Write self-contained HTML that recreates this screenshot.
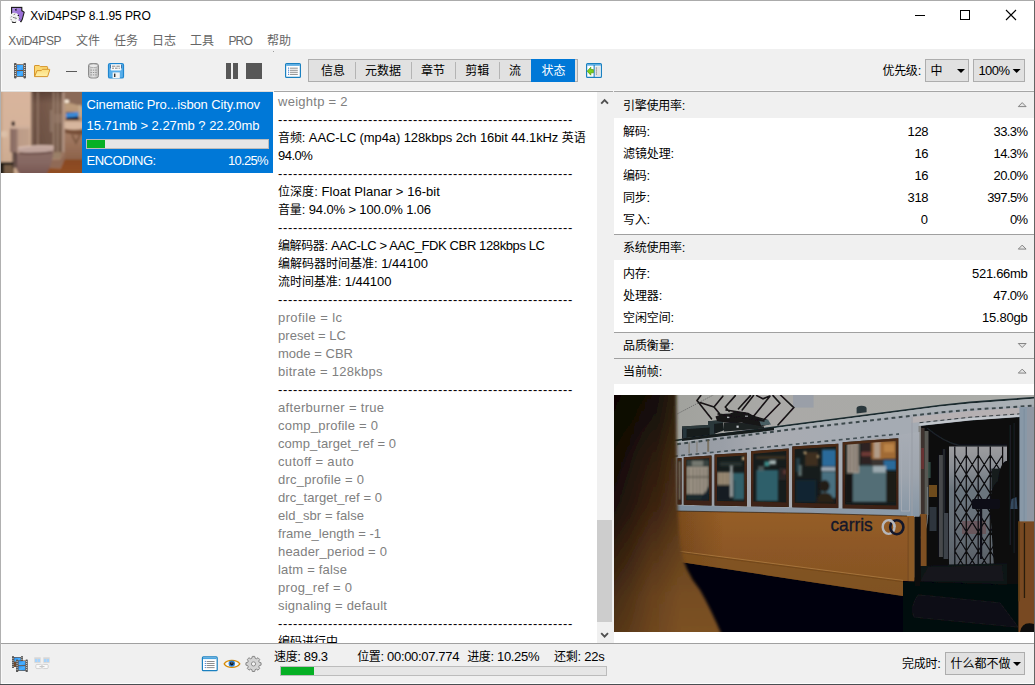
<!DOCTYPE html>
<html lang="zh-CN">
<head>
<meta charset="utf-8">
<title>XviD4PSP 8.1.95 PRO</title>
<style>
html,body{margin:0;padding:0;}
body{width:1035px;height:685px;overflow:hidden;background:#fff;font-family:"Liberation Sans","Noto Sans CJK SC",sans-serif;font-size:13px;color:#000;position:relative;}
.a{position:absolute;}
.t{position:absolute;white-space:nowrap;line-height:18px;height:18px;font-size:13px;}
.c{font-size:12px;}
svg{position:absolute;overflow:visible;}
</style>
</head>
<body>
<!-- window frame -->
<div class="a" style="left:0;top:0;width:1035px;height:1px;background:#ababab;"></div>
<div class="a" style="left:0;top:0;width:1px;height:685px;background:#b0b0b0;"></div>
<div class="a" style="left:1034px;top:1px;width:1px;height:684px;background:#646464;"></div>
<div class="a" style="left:0;top:684px;width:1035px;height:1px;background:#4a4f52;"></div>
<!-- toolbar -->
<div class="a" style="left:1px;top:49px;width:1033px;height:42px;background:#f0f0f0;"></div>
<div class="a" style="left:1px;top:90px;width:1033px;height:1px;background:#f7f7f7;"></div>
<div class="a" style="left:1px;top:91px;width:272px;height:1px;background:#dfdcd9;"></div>
<div class="a" style="left:273px;top:91px;width:1px;height:1px;background:#f4f4f4;"></div>
<div class="a" style="left:274px;top:91px;width:760px;height:1px;background:#a6a6a6;"></div>
<div class="a" style="left:613px;top:91px;width:1px;height:1px;background:#f0f0f0;"></div>
<div class="a" style="left:273px;top:51px;width:1px;height:1px;background:#9c9c9c;"></div>
<!-- tabs -->
<div class="a" style="left:308px;top:59px;width:270px;height:23px;box-sizing:border-box;background:#e1e1e1;border:1px solid #adadad;"></div>
<div class="a" style="left:355px;top:62px;width:1px;height:17px;background:#b4b4b4;"></div>
<div class="a" style="left:411px;top:62px;width:1px;height:17px;background:#b4b4b4;"></div>
<div class="a" style="left:455px;top:62px;width:1px;height:17px;background:#b4b4b4;"></div>
<div class="a" style="left:499px;top:62px;width:1px;height:17px;background:#b4b4b4;"></div>
<div class="a" style="left:531px;top:59px;width:44px;height:23px;background:#0078d7;"></div>
<!-- priority selects -->
<div class="a" style="left:925px;top:59px;width:44px;height:23px;box-sizing:border-box;background:#e1e1e1;border:1px solid #adadad;"></div>
<div class="a" style="left:973px;top:59px;width:52px;height:23px;box-sizing:border-box;background:#e1e1e1;border:1px solid #adadad;"></div>
<!-- left list -->
<svg style="left:1px;top:92px;" width="81" height="81" viewBox="0 0 81 81">
<defs>
<clipPath id="tc"><rect x="0" y="0" width="81" height="81"/></clipPath>
<filter id="tb" x="-10%" y="-10%" width="120%" height="120%"><feGaussianBlur stdDeviation="0.8"/></filter>
<linearGradient id="tw" x1="0" y1="0" x2="0" y2="1"><stop offset="0" stop-color="#d9b59d"/><stop offset="0.5" stop-color="#d5b39a"/><stop offset="1" stop-color="#c9a78c"/></linearGradient>
<linearGradient id="tsh" x1="0" y1="0" x2="1" y2="0"><stop offset="0" stop-color="#6e5244"/><stop offset="0.35" stop-color="#755849"/><stop offset="0.7" stop-color="#7c6050"/><stop offset="1" stop-color="#866a58"/></linearGradient>
<linearGradient id="tshy" x1="0" y1="0" x2="0" y2="1"><stop offset="0" stop-color="#3a241e" stop-opacity="0.5"/><stop offset="0.2" stop-color="#3a241e" stop-opacity="0"/><stop offset="1" stop-color="#3a2a20" stop-opacity="0.2"/></linearGradient>
<linearGradient id="tfl" x1="0" y1="0" x2="0" y2="1"><stop offset="0" stop-color="#884821"/><stop offset="1" stop-color="#935020"/></linearGradient>
<linearGradient id="ttl" x1="0" y1="0" x2="0" y2="1"><stop offset="0" stop-color="#8a6c66"/><stop offset="0.5" stop-color="#866862"/><stop offset="1" stop-color="#765450"/></linearGradient>
<linearGradient id="trw" x1="0" y1="0" x2="0" y2="1"><stop offset="0" stop-color="#a08062"/><stop offset="0.12" stop-color="#bc9c7c"/><stop offset="0.4" stop-color="#b08a70"/><stop offset="0.6" stop-color="#a27a62"/><stop offset="1" stop-color="#8c624a"/></linearGradient>
<linearGradient id="ttk" x1="0" y1="0" x2="1" y2="0"><stop offset="0" stop-color="#8a6c62"/><stop offset="0.3" stop-color="#907268"/><stop offset="0.45" stop-color="#bc9c88"/><stop offset="1" stop-color="#c0a08a"/></linearGradient>
</defs>
<g clip-path="url(#tc)"><g filter="url(#tb)">
<rect x="-2" y="-2" width="85" height="85" fill="url(#tw)"/>
<rect x="-2" y="-2" width="3.4" height="85" fill="#c4a288"/>
<!-- right wall / ceiling -->
<rect x="63" y="6" width="20" height="62" fill="url(#trw)"/>
<path d="M63 -2 H83 V15 L63 9 Z" fill="#8a6a58"/>
<ellipse cx="65.6" cy="9.2" rx="2.5" ry="1.7" fill="#fff0de"/>
<!-- shower -->
<rect x="30" y="-2" width="33.4" height="69.5" fill="url(#tsh)"/>
<rect x="30" y="-2" width="33.4" height="69.5" fill="url(#tshy)"/>
<rect x="36.2" y="0" width="1.3" height="66" fill="#9a7e6e"/>
<rect x="31" y="0" width="1" height="66" fill="#a68a78" fill-opacity="0.7"/>
<rect x="52" y="0" width="1.3" height="68" fill="#a08472"/>
<rect x="56" y="0" width="1.1" height="68" fill="#aa8e7c" fill-opacity="0.8"/>
<rect x="61.4" y="0" width="2" height="66" fill="#bc9e8c"/>
<rect x="49.5" y="18" width="1.4" height="22" fill="#a89080" fill-opacity="0.8"/>
<rect x="53.5" y="22" width="8" height="9" fill="#9a8070" fill-opacity="0.55"/>
<!-- shower tray -->
<path d="M49.6 60.4 L60.6 60 L63.6 60 V68 L59.6 76.4 L48 76.4 L48 67 Z" fill="#906a56"/>
<path d="M50.6 60.4 L60.8 60 L59 67 L48.6 67.4 Z" fill="#9a8068"/>
<path d="M48.4 67.4 L59 67 L63 60.4" stroke="#b08870" stroke-width="0.9" fill="none"/>
<!-- floor -->
<path d="M40 83 L45 76 L59.6 76.4 L63.5 67.6 H83 V83 Z" fill="url(#tfl)"/>
<!-- window / mirror -->
<rect x="65" y="20.4" width="12.6" height="7.6" fill="#101826"/>
<path d="M65 21.2 L77.6 19.8 V24.6 L65 25.8 Z" fill="#3a8ad8"/>
<rect x="77.6" y="13" width="2.6" height="12" fill="#c8ae90"/>
<!-- sink -->
<path d="M63.4 29.6 H83 V36.6 Q72 38.4 63.4 36.4 Z" fill="#d6b69e"/>
<path d="M64 37 Q72 39.4 83 37.2 V42.4 Q73 43.6 64 41 Z" fill="#6e4630" fill-opacity="0.85"/>
<path d="M71 43 L75 51 L79 43" stroke="#7a5640" stroke-width="1.8" fill="none"/>
<!-- bin -->
<rect x="-2" y="70" width="15" height="13" fill="#241a18"/>
<rect x="3" y="73" width="10" height="9" fill="#84684c" fill-opacity="0.85"/>
<!-- toilet tank -->
<rect x="9" y="34.4" width="19.6" height="26" rx="1.5" fill="url(#ttk)"/>
<rect x="9" y="34.2" width="19.6" height="2.6" rx="1.2" fill="#cfb09c"/>
<rect x="10.6" y="29.6" width="3.2" height="4.2" rx="1" fill="#2a1e1c"/>
<rect x="0" y="39" width="6.4" height="6.2" rx="1.6" fill="#dcc0a8"/>
<!-- toilet bowl -->
<path d="M13 61 Q14 80 20 83 H45 Q52 70 52.6 58 L40 60 Z" fill="url(#ttl)"/>
<path d="M17 55.4 Q34 52.4 52.4 54 Q53.4 57.4 51 59.4 Q33 61.6 18.4 60.6 Q16 58 17 55.4 Z" fill="#c0a49c"/>
<path d="M17.4 55.6 Q34 52.8 52.2 54.2" stroke="#e0c4b8" stroke-width="1.2" fill="none"/>
<path d="M18.4 61.2 Q33 62.6 51 60.2" stroke="#664842" stroke-width="1.8" fill="none"/>
<rect x="11" y="60" width="5" height="16" fill="#3c2c2a" fill-opacity="0.6"/>
</g></g>
</svg>

<div class="a" style="left:82px;top:92px;width:191px;height:81px;background:#0078d7;"></div>
<div class="a" style="left:86px;top:139px;width:183px;height:10px;box-sizing:border-box;background:#e6e6e6;border:1px solid #bcbcbc;"></div>
<div class="a" style="left:87px;top:140px;width:18px;height:8px;background:#06b025;"></div>
<!-- text pane -->
<div class="a" style="left:273px;top:92px;width:324px;height:551px;overflow:hidden;">
<div class="t" style="top:1px;left:5px;color:#808080;letter-spacing:0.26px;">weightp = 2</div>
<div class="t" style="top:19px;left:5px;letter-spacing:0.67px;">-----------------------------------------------------------</div>
<div class="t" style="top:37px;left:5px;letter-spacing:-0.09px;"><span class="c">音频</span>: AAC-LC (mp4a) 128kbps 2ch 16bit 44.1kHz <span class="c">英语</span></div>
<div class="t" style="top:55px;left:5px;letter-spacing:-0.50px;">94.0%</div>
<div class="t" style="top:73px;left:5px;letter-spacing:0.67px;">-----------------------------------------------------------</div>
<div class="t" style="top:91px;left:5px;letter-spacing:0.05px;"><span class="c">位深度</span>: Float Planar &gt; 16-bit</div>
<div class="t" style="top:109px;left:5px;letter-spacing:-0.13px;"><span class="c">音量</span>: 94.0% &gt; 100.0% 1.06</div>
<div class="t" style="top:127px;left:5px;letter-spacing:0.67px;">-----------------------------------------------------------</div>
<div class="t" style="top:145px;left:5px;letter-spacing:-0.39px;"><span class="c">编解码器</span>: AAC-LC &gt; AAC_FDK CBR 128kbps LC</div>
<div class="t" style="top:163px;left:5px;letter-spacing:-0.01px;"><span class="c">编解码器时间基准</span>: 1/44100</div>
<div class="t" style="top:181px;left:5px;letter-spacing:-0.06px;"><span class="c">流时间基准</span>: 1/44100</div>
<div class="t" style="top:199px;left:5px;letter-spacing:0.67px;">-----------------------------------------------------------</div>
<div class="t" style="top:217px;left:5px;color:#808080;letter-spacing:0.40px;">profile = lc</div>
<div class="t" style="top:235px;left:5px;color:#808080;letter-spacing:0.04px;">preset = LC</div>
<div class="t" style="top:253px;left:5px;color:#808080;letter-spacing:0.02px;">mode = CBR</div>
<div class="t" style="top:271px;left:5px;color:#808080;letter-spacing:0.28px;">bitrate = 128kbps</div>
<div class="t" style="top:289px;left:5px;letter-spacing:0.67px;">-----------------------------------------------------------</div>
<div class="t" style="top:307px;left:5px;color:#808080;letter-spacing:0.31px;">afterburner = true</div>
<div class="t" style="top:325px;left:5px;color:#808080;letter-spacing:0.23px;">comp_profile = 0</div>
<div class="t" style="top:343px;left:5px;color:#808080;letter-spacing:0.07px;">comp_target_ref = 0</div>
<div class="t" style="top:361px;left:5px;color:#808080;letter-spacing:0.33px;">cutoff = auto</div>
<div class="t" style="top:379px;left:5px;color:#808080;letter-spacing:0.23px;">drc_profile = 0</div>
<div class="t" style="top:397px;left:5px;color:#808080;letter-spacing:0.06px;">drc_target_ref = 0</div>
<div class="t" style="top:415px;left:5px;color:#808080;letter-spacing:0.08px;">eld_sbr = false</div>
<div class="t" style="top:433px;left:5px;color:#808080;letter-spacing:0.05px;">frame_length = -1</div>
<div class="t" style="top:451px;left:5px;color:#808080;letter-spacing:0.19px;">header_period = 0</div>
<div class="t" style="top:469px;left:5px;color:#808080;letter-spacing:0.20px;">latm = false</div>
<div class="t" style="top:487px;left:5px;color:#808080;letter-spacing:0.32px;">prog_ref = 0</div>
<div class="t" style="top:505px;left:5px;color:#808080;letter-spacing:0.21px;">signaling = default</div>
<div class="t" style="top:523px;left:5px;letter-spacing:0.67px;">-----------------------------------------------------------</div>
<div class="t" style="top:541px;left:5px;"><span class="c">编码进行中</span></div>
</div>
<!-- scrollbar -->
<div class="a" style="left:597px;top:92px;width:17px;height:551px;background:#f0f0f0;"></div>
<div class="a" style="left:597px;top:520px;width:15px;height:102px;background:#cdcdcd;"></div>
<!-- right panel -->
<div class="a" style="left:614px;top:92px;width:420px;height:26px;background:#f0f0f0;"></div>
<div class="a" style="left:614px;top:234px;width:420px;height:1px;background:#a0a0a0;"></div>
<div class="a" style="left:614px;top:235px;width:420px;height:25px;background:#f0f0f0;"></div>
<div class="a" style="left:614px;top:332px;width:420px;height:1px;background:#a0a0a0;"></div>
<div class="a" style="left:614px;top:333px;width:420px;height:25px;background:#f0f0f0;"></div>
<div class="a" style="left:614px;top:358px;width:420px;height:1px;background:#a0a0a0;"></div>
<div class="a" style="left:614px;top:359px;width:420px;height:25px;background:#f0f0f0;"></div>
<svg style="left:614px;top:395px;" width="420" height="237" viewBox="0 0 420 237">
<defs>
<clipPath id="fc"><rect x="0" y="0" width="420" height="237"/></clipPath>
<filter id="b1" x="-5%" y="-5%" width="110%" height="110%"><feGaussianBlur stdDeviation="0.5"/></filter>
<filter id="b2" x="-10%" y="-10%" width="120%" height="120%"><feGaussianBlur stdDeviation="0.9"/></filter>
<filter id="b4" x="-40%" y="-10%" width="180%" height="120%"><feGaussianBlur stdDeviation="1.8"/></filter>
<linearGradient id="wall" gradientUnits="userSpaceOnUse" x1="0" y1="0" x2="420" y2="0"><stop offset="0.15" stop-color="#a1a29d"/><stop offset="0.38" stop-color="#aaa9a7"/><stop offset="0.8" stop-color="#a9aaa6"/><stop offset="1" stop-color="#adaeab"/></linearGradient>
<linearGradient id="body" gradientUnits="userSpaceOnUse" x1="0" y1="116" x2="0" y2="200"><stop offset="0" stop-color="#965e26"/><stop offset="0.5" stop-color="#8c5725"/><stop offset="1" stop-color="#845322"/></linearGradient>
<linearGradient id="bodyx" gradientUnits="userSpaceOnUse" x1="60" y1="0" x2="110" y2="0"><stop offset="0" stop-color="#3a2008" stop-opacity="0.3"/><stop offset="1" stop-color="#3a2008" stop-opacity="0"/></linearGradient>
<linearGradient id="fg" gradientUnits="userSpaceOnUse" x1="0" y1="0" x2="0" y2="237"><stop offset="0" stop-color="#140e07"/><stop offset="0.1" stop-color="#1a1209"/><stop offset="0.25" stop-color="#2a1a0c"/><stop offset="0.46" stop-color="#3a2210"/><stop offset="0.67" stop-color="#543418"/><stop offset="0.85" stop-color="#68421e"/><stop offset="1" stop-color="#6e461f"/></linearGradient>
<linearGradient id="fgx" gradientUnits="userSpaceOnUse" x1="0" y1="0" x2="38" y2="0"><stop offset="0" stop-color="#000" stop-opacity="0.6"/><stop offset="0.4" stop-color="#000" stop-opacity="0.4"/><stop offset="1" stop-color="#000" stop-opacity="0"/></linearGradient>
<linearGradient id="fgmk" gradientUnits="userSpaceOnUse" x1="0" y1="0" x2="0" y2="237"><stop offset="0" stop-color="#fff"/><stop offset="0.5" stop-color="#ddd"/><stop offset="1" stop-color="#666"/></linearGradient>
<mask id="fgmask"><rect x="-30" y="-30" width="200" height="320" fill="url(#fgmk)"/></mask>
<linearGradient id="fgr" gradientUnits="userSpaceOnUse" x1="42" y1="0" x2="66" y2="0"><stop offset="0" stop-color="#b07a30" stop-opacity="0"/><stop offset="1" stop-color="#b07a30" stop-opacity="0.2"/></linearGradient>
<linearGradient id="fascia" gradientUnits="userSpaceOnUse" x1="0" y1="0" x2="420" y2="0"><stop offset="0.16" stop-color="#969ba2"/><stop offset="0.26" stop-color="#9a9fa7"/><stop offset="0.37" stop-color="#a9abb1"/><stop offset="0.6" stop-color="#a5abb3"/><stop offset="1" stop-color="#a5abb3"/></linearGradient>
<linearGradient id="sea" x1="0" y1="0" x2="0" y2="1"><stop offset="0" stop-color="#9c9c9f"/><stop offset="0.18" stop-color="#8a8e94"/><stop offset="0.36" stop-color="#6c767e"/><stop offset="0.7" stop-color="#666e76"/><stop offset="1" stop-color="#596067"/></linearGradient>
<linearGradient id="sill" gradientUnits="userSpaceOnUse" x1="60" y1="0" x2="290" y2="0"><stop offset="0" stop-color="#7c8e9e"/><stop offset="0.4" stop-color="#8e98a4"/><stop offset="1" stop-color="#8a9aa9"/></linearGradient>
<linearGradient id="pil" x1="0" y1="0" x2="0" y2="1"><stop offset="0" stop-color="#a8adb5"/><stop offset="0.5" stop-color="#9ea5ae"/><stop offset="1" stop-color="#8696a5"/></linearGradient>
<linearGradient id="wood" x1="0" y1="0" x2="0" y2="1"><stop offset="0" stop-color="#4c2b17"/><stop offset="1" stop-color="#3c2012"/></linearGradient>
</defs>
<g clip-path="url(#fc)">
<g filter="url(#b1)">
<rect x="-2" y="-2" width="424" height="241" fill="url(#wall)"/>
<rect x="179" y="-2" width="20.6" height="14.6" fill="#9a9fa8"/>
<path d="M60 150 L430 200 V240 H60 Z" fill="#05050d"/>
<path d="M56.0 45.3 L66.0 44.0 L120.0 36.8 L176.0 29.3 L230.0 22.2 L280.0 15.7 L326.0 9.7 L356.0 6.6 L390.0 4.1 L424.0 1.6 L424 130 L56 116 Z" fill="url(#fascia)"/>
<path d="M56.0 45.3 L66.0 44.0 L120.0 36.8 L176.0 29.3 L230.0 22.2 L280.0 15.7 L326.0 9.7 L356.0 6.6 L390.0 4.1 L424.0 1.6 L424.0 3.4 L390.0 5.9 L356.0 8.4 L326.0 11.5 L280.0 17.5 L230.0 24.0 L176.0 31.1 L120.0 38.6 L66.0 45.8 L56.0 47.1 Z" fill="#1b2c2e"/>
<path d="M56.0 47.1 L66.0 45.8 L120.0 38.6 L176.0 31.1 L230.0 24.0 L280.0 17.5 L326.0 11.5 L356.0 8.4 L390.0 5.9 L424.0 3.4 L424.0 9.4 L390.0 11.6 L356.0 13.8 L326.0 16.5 L280.0 21.8 L230.0 27.5 L176.0 33.6 L120.0 40.8 L66.0 47.8 L56.0 49.1 Z" fill="#aab0b5"/>
<path d="M56.0 50.1 L66.0 48.8 L120.0 41.8 L176.0 34.6 L230.0 28.5 L280.0 22.8 L326.0 17.5 L356.0 14.8 L390.0 12.6 L424.0 10.4" stroke="#3c484c" stroke-width="2.0" fill="none" stroke-dasharray="3.8 3.4"/>
<path d="M60 61.3 L285 39" stroke="#465258" stroke-width="1.8" stroke-dasharray="3.8 3.4" fill="none"/>
<path d="M60 62.2 L285 40 V45.6 L60 65 Z" fill="#a3a9b3"/>
<path d="M60 115.8 L196 118.1 L291 120.8 L300 121 V187 L289 186 V201 L60 166 Z" fill="url(#body)"/>
<path d="M60 115.8 L196 118.1 L291 120.8 L300 121 V187 L289 186 V201 L60 166 Z" fill="url(#bodyx)"/>
<path d="M60 156.6 L289 186.4 V201 L60 166 Z" fill="#7d5120" fill-opacity="0.7"/>
<path d="M60 155.6 L289 185.4" stroke="#b98a4c" stroke-opacity="0.55" stroke-width="1" fill="none"/>
<path d="M60 156.8 L289 186.6" stroke="#5a3a14" stroke-opacity="0.5" stroke-width="0.8" fill="none"/>
<rect x="294.2" y="122" width="6.6" height="65" fill="#8b5a26"/>
<rect x="293.6" y="122" width="1" height="65" fill="#764a1e"/>

<path d="M63.5 63.3 L67.5 63.0 L67.5 109.6 L63.5 109.5 Z" fill="#141a1c"/>
<path d="M69.8 62.2 L97.5 60.6 L97.5 110.4 L69.8 109.8 Z" fill="#141a1c"/>
<path d="M100.6 59.6 L132.8 57.8 L132.8 111.2 L100.6 110.6 Z" fill="#141a1c"/>
<path d="M137.0 56.2 L174.7 53.4 L174.7 112.0 L137.0 111.2 Z" fill="#141a1c"/>
<path d="M178.3 51.6 L224.3 48.8 L224.3 113.3 L178.3 112.4 Z" fill="#141a1c"/>
<path d="M228.7 47.2 L284.6 43.2 L284.6 115.1 L228.7 114.0 Z" fill="#141a1c"/>
</g><g filter="url(#b2)">
<rect x="64.3" y="66.0" width="2.4" height="39.0" fill="#8e7c66"/>
<rect x="72.2" y="72.0" width="22.9" height="27.0" fill="#a89f90"/>
<rect x="72.2" y="64.8" width="22.9" height="7.2" fill="#39423f"/>
<rect x="78.0" y="65.5" width="11.0" height="5.5" fill="#757870"/>
<rect x="72.2" y="99.0" width="22.9" height="6.2" fill="#1c2a2f"/>
<rect x="74.5" y="73.0" width="1.1" height="26.0" fill="#3a362f" fill-opacity="0.8"/>
<rect x="78.5" y="73.0" width="1.1" height="26.0" fill="#3a362f" fill-opacity="0.8"/>
<rect x="82.0" y="73.0" width="1.1" height="26.0" fill="#3a362f" fill-opacity="0.8"/>
<rect x="85.5" y="73.0" width="1.1" height="26.0" fill="#3a362f" fill-opacity="0.8"/>
<rect x="89.0" y="73.0" width="1.1" height="26.0" fill="#3a362f" fill-opacity="0.8"/>
<rect x="92.5" y="73.0" width="1.1" height="26.0" fill="#3a362f" fill-opacity="0.8"/>
<rect x="72.2" y="81.0" width="22.9" height="2.0" fill="#5a564d" fill-opacity="0.6"/>
<path d="M86.0 105.2 L95.1 91.0 L95.1 105.2 Z" fill="#17242a"/>
<rect x="103.0" y="77.0" width="13.0" height="13.0" fill="#a09078"/>
<rect x="103.0" y="91.0" width="14.0" height="15.0" fill="#161e21"/>
<rect x="119.0" y="77.8" width="11.4" height="26.8" fill="#33606a"/>
<rect x="116.4" y="71.0" width="2.0" height="31.0" fill="#b9c1c1"/>
<rect x="119.0" y="85.0" width="2.5" height="19.0" fill="#2a5058"/>
<circle cx="129.6" cy="63.4" r="1.6" fill="#f4cf96"/>
<rect x="106.0" y="67.0" width="22.0" height="4.0" fill="#2f3a38" fill-opacity="0.7"/>
<rect x="105.0" y="77.0" width="0.9" height="14.0" fill="#48423a" fill-opacity="0.7"/>
<rect x="108.5" y="77.0" width="0.9" height="14.0" fill="#48423a" fill-opacity="0.7"/>
<rect x="112.0" y="77.0" width="0.9" height="14.0" fill="#48423a" fill-opacity="0.7"/>
<rect x="115.0" y="77.0" width="0.9" height="14.0" fill="#48423a" fill-opacity="0.7"/>
<rect x="142.3" y="75.0" width="21.7" height="31.0" fill="#2e5e6a"/>
<rect x="150.4" y="66.4" width="5.0" height="5.0" fill="#3a8a86"/>
<rect x="155.4" y="65.2" width="6.6" height="4.2" fill="#a4b2b2"/>
<rect x="142.0" y="61.0" width="30.0" height="3.0" fill="#5a3f28" fill-opacity="0.55"/>
<rect x="144.0" y="71.0" width="6.0" height="4.8" fill="#5e6c6c" fill-opacity="0.7"/>
<rect x="165.0" y="73.0" width="7.3" height="12.0" fill="#2e2628" fill-opacity="0.8"/>
<rect x="169.5" y="75.0" width="2.5" height="4.0" fill="#80403a" fill-opacity="0.7"/>
<rect x="208.0" y="54.6" width="13.9" height="16.9" fill="#2a6a9a"/>
<rect x="207.0" y="72.0" width="14.9" height="4.0" fill="#98a6b2"/>
<rect x="207.5" y="76.5" width="14.4" height="26.5" fill="#4a7080"/>
<rect x="184.2" y="70.0" width="3.6" height="11.0" fill="#728482" fill-opacity="0.8"/>
<rect x="191.0" y="57.0" width="13.0" height="14.0" fill="#48341e" fill-opacity="0.8"/>
<rect x="182.0" y="85.0" width="20.0" height="22.0" fill="#10283a" fill-opacity="0.8"/>
<rect x="182.0" y="63.0" width="4.0" height="14.0" fill="#2f5460" fill-opacity="0.6"/>
<circle cx="190.8" cy="57.6" r="1.2" fill="#f0c88e"/>
<circle cx="204.2" cy="61.6" r="1" fill="#f0c88e"/>
<ellipse cx="210.6" cy="91.0" rx="5.2" ry="6" fill="#211a13"/>
<path d="M202.5 107.8 Q204.0 97.0 211.0 97.5 Q219.0 98.0 220.5 107.8 Z" fill="#2a2016"/>
<rect x="239.0" y="70.5" width="33.0" height="36.5" fill="#536e76"/>
<rect x="233.0" y="48.0" width="12.0" height="30.0" fill="#a89e92"/>
<rect x="235.5" y="49.0" width="1.1" height="28.0" fill="#3a2e28" fill-opacity="0.8"/>
<rect x="239.0" y="49.0" width="1.1" height="28.0" fill="#3a2e28" fill-opacity="0.8"/>
<rect x="242.3" y="49.0" width="1.1" height="28.0" fill="#3a2e28" fill-opacity="0.8"/>
<rect x="247.0" y="46.5" width="10.5" height="23.0" fill="#2e2220"/>
<rect x="247.0" y="57.0" width="10.5" height="4.0" fill="#6e3a36"/>
<rect x="257.5" y="45.5" width="24.7" height="18.5" fill="#a06a34"/>
<rect x="260.0" y="46.0" width="6.0" height="17.0" fill="#b4a89c" fill-opacity="0.8"/>
<rect x="270.0" y="49.0" width="10.0" height="8.0" fill="#bc8648" fill-opacity="0.9"/>
<rect x="269.5" y="65.0" width="12.7" height="10.0" fill="#2a6a9a"/>
<rect x="257.5" y="64.0" width="12.0" height="7.0" fill="#3a3532"/>
<rect x="259.0" y="71.0" width="13.0" height="6.5" fill="#a8b4ba" fill-opacity="0.85"/>
<rect x="272.0" y="77.0" width="10.2" height="30.0" fill="#1e1b18"/>
<rect x="231.1" y="79.0" width="7.9" height="28.0" fill="#181514"/>
</g><g filter="url(#b1)">
<path fill-rule="evenodd" d="M63.5 63.3 L67.5 63.0 L67.5 109.6 L63.5 109.5 Z M64.3 65.9 L66.7 65.6 L66.7 105.0 L64.3 104.9 Z" fill="url(#wood)"/>
<path fill-rule="evenodd" d="M69.8 62.2 L97.5 60.6 L97.5 110.4 L69.8 109.8 Z M72.2 64.8 L95.1 63.2 L95.1 105.8 L72.2 105.2 Z" fill="url(#wood)"/>
<path fill-rule="evenodd" d="M100.6 59.6 L132.8 57.8 L132.8 111.2 L100.6 110.6 Z M103.0 62.2 L130.4 60.4 L130.4 106.6 L103.0 106.0 Z" fill="url(#wood)"/>
<path fill-rule="evenodd" d="M137.0 56.2 L174.7 53.4 L174.7 112.0 L137.0 111.2 Z M139.4 58.8 L172.3 56.0 L172.3 107.4 L139.4 106.6 Z" fill="url(#wood)"/>
<path fill-rule="evenodd" d="M178.3 51.6 L224.3 48.8 L224.3 113.3 L178.3 112.4 Z M180.7 54.2 L221.9 51.4 L221.9 108.7 L180.7 107.8 Z" fill="url(#wood)"/>
<path fill-rule="evenodd" d="M228.7 47.2 L284.6 43.2 L284.6 115.1 L228.7 114.0 Z M231.1 49.8 L282.2 45.8 L282.2 110.5 L231.1 109.4 Z" fill="url(#wood)"/>
</g>
<g filter="url(#b1)">
<path d="M297 22.1 L356 16.0 L420 11.9 V18.4 L356 22.2 L297 27.9 Z" fill="#b6b1b3"/>
<path d="M305.5 31.0 L356 25.5 L406.3 22.1 V200 H305.5 Z" fill="#090b10"/>
<path d="M305.5 29.6 L356 24.1 L406.3 20.7" stroke="#c3c7cc" stroke-width="2.2" fill="none"/>
<path d="M305.5 27.7 L356 22.2 L406.3 18.8" stroke="#343b3e" stroke-width="1" stroke-dasharray="4 3" fill="none"/>
<path d="M313 33 Q 330 47 345 50.5 L393 50.5" stroke="#1e2328" stroke-width="1.4" fill="none"/>
<rect x="335" y="51.5" width="58.2" height="118" fill="url(#sea)"/>
<rect x="348" y="126" width="24" height="13" fill="#6e3e40" fill-opacity="0.45"/>
<rect x="304.5" y="31" width="2.6" height="89" fill="#828280"/>
<rect x="307" y="33" width="3.6" height="87" fill="#3e302e"/>
<rect x="310.5" y="36" width="4" height="84" fill="#585852"/>
<rect x="315.5" y="112" width="7" height="24" fill="#3a4148" fill-opacity="0.8"/>
<rect x="307.2" y="53" width="2.8" height="21" fill="#7a3236" fill-opacity="0.7"/>
<rect x="314" y="67" width="2.6" height="16" fill="#3e5a50" fill-opacity="0.8"/>
<rect x="328.8" y="54" width="2.4" height="64" fill="#20262a"/>
<rect x="329.6" y="118" width="4.6" height="46" fill="#3c4248"/>
<rect x="324.9" y="60" width="4" height="102" fill="#464a4b"/>
<rect x="315" y="90" width="8" height="12" fill="#6e4c1e"/>
<path d="M313.5 92 V122 Q313 135 306.5 143" stroke="#70767a" stroke-width="1.2" fill="none"/>
<path d="M340.8 51.6V172M352.3 51.6V172M364.2 51.6V172M376.3 51.6V172M388.6 51.6V172M340.8 60.0L352.3 79.2M352.3 60.0L340.8 79.2M340.8 79.2L352.3 98.4M352.3 79.2L340.8 98.4M340.8 98.4L352.3 117.6M352.3 98.4L340.8 117.6M340.8 117.6L352.3 136.8M352.3 117.6L340.8 136.8M340.8 136.8L352.3 156.0M352.3 136.8L340.8 156.0M340.8 156.0L352.3 175.2M352.3 156.0L340.8 175.2M352.3 60.0L364.2 79.2M364.2 60.0L352.3 79.2M352.3 79.2L364.2 98.4M364.2 79.2L352.3 98.4M352.3 98.4L364.2 117.6M364.2 98.4L352.3 117.6M352.3 117.6L364.2 136.8M364.2 117.6L352.3 136.8M352.3 136.8L364.2 156.0M364.2 136.8L352.3 156.0M352.3 156.0L364.2 175.2M364.2 156.0L352.3 175.2M364.2 60.0L376.3 79.2M376.3 60.0L364.2 79.2M364.2 79.2L376.3 98.4M376.3 79.2L364.2 98.4M364.2 98.4L376.3 117.6M376.3 98.4L364.2 117.6M364.2 117.6L376.3 136.8M376.3 117.6L364.2 136.8M364.2 136.8L376.3 156.0M376.3 136.8L364.2 156.0M364.2 156.0L376.3 175.2M376.3 156.0L364.2 175.2M376.3 60.0L388.6 79.2M388.6 60.0L376.3 79.2M376.3 79.2L388.6 98.4M388.6 79.2L376.3 98.4M376.3 98.4L388.6 117.6M388.6 98.4L376.3 117.6M376.3 117.6L388.6 136.8M388.6 117.6L376.3 136.8M376.3 136.8L388.6 156.0M388.6 136.8L376.3 156.0M376.3 156.0L388.6 175.2M388.6 156.0L376.3 175.2" stroke="#0d0d11" stroke-width="1.25" fill="none"/>
<rect x="377.4" y="73.6" width="15.4" height="21" fill="#141a1e"/>
<path d="M376 112 Q376 92 384 86 Q386 68 392 66 L394 66 V172 H380 Z" fill="#0a0c0f"/>
<rect x="358" y="104" width="28" height="10" rx="1.5" fill="#0e1013"/>
<rect x="366" y="114" width="2.2" height="50" fill="#0e1013"/>
<rect x="393" y="26" width="13.6" height="211" fill="#07090e"/>
<path d="M397.5 104 L402.5 102 L403.5 114 L396 114 Z" fill="#3a5068" fill-opacity="0.9"/>
<rect x="395.6" y="30" width="1.2" height="120" fill="#2a3038" fill-opacity="0.7"/>
<rect x="399.5" y="28" width="1.2" height="130" fill="#20262c" fill-opacity="0.7"/>
<path d="M305 171 L393 168 V190 L300 188 Z" fill="#0f1215"/>
<path d="M314 172 L388 170 L390 186 L306 186 Z" fill="#14181a"/>
<path d="M289 186 L406 190 V237 H289 Z" fill="#06070c"/>
<path d="M304 200 L386 208 L404 232 L300 222 Q296 212 304 200 Z" fill="#0b0d12" stroke="#14161c" stroke-width="1"/>
<rect x="306.2" y="119" width="6.4" height="52" fill="#7e5020"/>
<rect x="300.6" y="121.6" width="6" height="70" fill="#08090d"/>
<path d="M284.6 40 L305.5 37 V121.2 L284.6 120.6 Z" fill="url(#pil)"/>
<rect x="297.4" y="22" width="1.2" height="99" fill="#9aa0a8"/>
<rect x="287.5" y="48" width="8" height="68" fill="none" stroke="#a6acb4" stroke-width="0.9"/>
<rect x="405.4" y="12" width="15" height="116" fill="#8898a7"/>
<rect x="413" y="12" width="8" height="116" fill="#9197a3" fill-opacity="0.8"/>
<rect x="409.6" y="14" width="1.2" height="112" fill="#7e90a0"/>
<rect x="404.4" y="126.4" width="16" height="112" fill="#784a20"/>
<rect x="409.8" y="128" width="1.3" height="75" fill="#2a1a10"/>
<rect x="404" y="126.4" width="1.6" height="80" fill="#5a3a16"/>
<path d="M406 237 Q408 226 420 229 V237 Z" fill="#0a0a0c"/>
<path d="M60 110.6 L286 114.4 V120.8 L196 118.2 L60 115.9 Z" fill="url(#sill)"/>
<path d="M60 116 L196 118.3 L293 121" stroke="#2a1808" stroke-opacity="0.75" stroke-width="0.9" fill="none"/>
<path d="M242.6 18.4 V13.5 Q242.6 10.8 247.5 10.8 Q252.6 10.8 252.6 13.5 V17.2 Z" fill="#2c393e"/>
<path d="M68 31.5 L94 30 V26.2 L109 25 L110 35.2 L97.5 40 L68 43.4 Z" fill="#121a1c"/>
<path d="M68 31.5 L94 30 V26.2 L109 25 L109.3 28 L96 29.2 L96 32.6 L68 34.4 Z" fill="#2e3a3c"/>
<rect x="95.6" y="26.4" width="4.6" height="14" fill="#2c383a"/><rect x="68.6" y="33" width="4" height="11" fill="#28343a"/>
<path d="M68 43.4 L110 38 L160 32.4 V35.2 L68 46 Z" fill="#141b1d"/>
<path d="M101.5 21.5 L108 19 L116 18.6 L121 16.4 L131 17.4 L137 20 L146 22.4 L153 24.6 L155 29.6 L146 31.4 L133 30.4 L128 27.4 L120 28.6 L112 27.4 L103 26 Z" fill="#151316"/>
<path d="M110 27.6 L128 27.8 L150 31.4 L150 33.4 L110 36.6 Z" fill="#1d2124"/>
<rect x="113" y="21.5" width="2.4" height="1.6" fill="#a8acb0"/><rect x="131" y="20.6" width="3" height="1.2" fill="#999da0"/><rect x="122.5" y="30.6" width="2.2" height="2.2" fill="#c4c8cb"/>
<path d="M145 25 L154 24.4 L157 29.6 L147 30.6 Z" fill="#4a5e64"/>
<path d="M83 5.6L86.8 0.6M83 5.6L97.5 23.8M86 7.5L100 12M100 12L108.8 1.2M100 12L105.6 18.8M111.3 12L121.3 0.6M111.3 12L115 16.3M124.5 13.8L136.4 0.6M128.2 15L139.5 0.6M137.6 23.8L155.9 1.2M149.6 25L166 8.2M159 0.6L166 8.2M166.5 0L179.8 12.6L164 30M142.7 0.6L149 3.8L155.2 1.2M104 19L150 26M112 15L134 18.5L140 22" stroke="#161214" stroke-width="1.6" fill="none" stroke-linecap="round"/>
<path d="M63.5 18.8L99.3 0" stroke="#4a4a4c" stroke-width="0.6" stroke-dasharray="1.2 1" fill="none"/>
<rect x="74.5" y="47.5" width="1.2" height="11" fill="#6e624a" fill-opacity="0.6"/><rect x="82.4" y="46.5" width="1.1" height="11" fill="#6e624a" fill-opacity="0.5"/><rect x="93.2" y="44.8" width="2" height="12" fill="#6a5c40" fill-opacity="0.65"/>
</g>
<text x="216.4" y="135.6" font-family="'Liberation Sans',sans-serif" font-size="18.6" textLength="42.3" lengthAdjust="spacingAndGlyphs" fill="#14172a" stroke="#14172a" stroke-width="0.35">carris</text>
<ellipse cx="274.6" cy="132" rx="5.9" ry="6.9" fill="none" stroke="#b6b7bb" stroke-width="2.4"/>
<ellipse cx="282.8" cy="132.2" rx="6.6" ry="7" fill="none" stroke="#14172a" stroke-width="2.6"/>
<path d="M274.6 125.1 A5.9 6.9 0 0 1 280.5 132" fill="none" stroke="#b6b7bb" stroke-width="2.4"/>
<g filter="url(#b4)">
<path d="M-12 -12 H62.3 L62.8 60 Q63.2 120 66 150 Q70 176 86 195 Q98 216 112 250 H-12 Z" fill="url(#fg)"/>
<path d="M-12 -12 H62.3 L62.8 60 Q63.2 120 66 150 Q70 176 86 195 Q98 216 112 250 H-12 Z" fill="url(#fgx)" mask="url(#fgmask)"/>
<path d="M-12 -12 H62.3 L62.8 60 Q63.2 120 66 150 Q70 176 86 195 Q98 216 112 250 H-12 Z" fill="url(#fgr)"/>
</g>
</g>
</svg>
<!-- bottom bar -->
<div class="a" style="left:1px;top:643px;width:1033px;height:1px;background:#a0a0a0;"></div>
<div class="a" style="left:1px;top:644px;width:1033px;height:40px;background:#f0f0f0;"></div>
<div class="a" style="left:280px;top:666px;width:327px;height:10px;box-sizing:border-box;background:#e6e6e6;border:1px solid #bcbcbc;"></div>
<div class="a" style="left:281px;top:667px;width:33px;height:8px;background:#06b025;"></div>
<div class="a" style="left:945px;top:652px;width:80px;height:23px;box-sizing:border-box;background:#e1e1e1;border:1px solid #adadad;"></div>
<div class="a" style="left:1px;top:683px;width:1033px;height:1px;background:#fcfcfc;"></div>
<div class="a" style="left:1px;top:644px;width:1px;height:40px;background:#f9f9f9;"></div>
<div class="a" style="left:1px;top:49px;width:1px;height:42px;background:#f9f9f9;"></div>
<svg class="ico" style="left:0;top:0;" width="1035" height="685" viewBox="0 0 1035 685">
<defs>
<linearGradient id="gBlue" x1="0" y1="0" x2="1" y2="1"><stop offset="0" stop-color="#1e90ff"/><stop offset="0.55" stop-color="#4db2ff"/><stop offset="1" stop-color="#1e96ff"/></linearGradient>
<linearGradient id="gFold" x1="0" y1="0" x2="0" y2="1"><stop offset="0" stop-color="#fbdc7c"/><stop offset="1" stop-color="#fff0a8"/></linearGradient>
<linearGradient id="gCan" x1="0" y1="0" x2="1" y2="0"><stop offset="0" stop-color="#bdbdbd"/><stop offset="0.5" stop-color="#e4e4e4"/><stop offset="1" stop-color="#b4b4b4"/></linearGradient>
<linearGradient id="gPur" x1="0" y1="0" x2="1" y2="1"><stop offset="0" stop-color="#b79ae6"/><stop offset="1" stop-color="#8e5fd0"/></linearGradient>
</defs>
<!-- app icon -->
<g>
<rect x="11.6" y="7.4" width="10.2" height="8" fill="url(#gPur)" stroke="#161616" stroke-width="1.1"/>
<path d="M16.4 10.4 L23.6 11.4 L24.1 12.6 L21.4 21.4 L18.4 20.4 L17 14 Z" fill="#9a6fd6"/>
<path d="M14.8 9.8 Q15.4 8.6 17.2 8.8 Q16 9.4 16.6 10.8 Q15.2 11 14.8 9.8 Z" fill="#1c1c22"/>
<path d="M22 10.8 L24.2 12.2 L22.2 19.6 L21 21.8 L20.2 21.2" fill="none" stroke="#1e1e1e" stroke-width="1.1" stroke-linejoin="round"/>
<path d="M9.5 17.4 C9.7 14.2 12.4 12.4 15 12.7 C17.4 12.9 18.5 14.6 18.8 16.4 C19.4 17.8 19.2 19.4 18 19.9 C16.6 21.3 14 21.6 12 21.2 C10.4 20.8 9.4 19.2 9.5 17.4 Z" fill="#f3f3f3"/>
<path d="M11.6 21 C12.8 22.2 15 22.4 16.4 21.6 L15.6 22.9 L12.4 22.9 Z" fill="#2a2a2a"/>
<path d="M13.6 14.8 l1.7 -0.9 M12.8 17 l1.3 0.9 l1.5 -0.6 M10.8 17.2 l0.9 -0.7 M15.2 18.8 l1.6 -0.6 M10.6 19.4 l1.2 0.5" stroke="#5a5a5a" stroke-width="0.8" fill="none"/>
<circle cx="18.3" cy="15.5" r="0.75" fill="#111"/>
<path d="M18.6 17.6 L20.2 19.4" stroke="#3a6a2a" stroke-width="0.6"/>
</g>
<!-- window buttons -->
<path d="M915 15.5H925" stroke="#000" stroke-width="1"/>
<rect x="960.5" y="10.5" width="9" height="9" fill="none" stroke="#000" stroke-width="1"/>
<path d="M1006 10L1016 20M1016 10L1006 20" stroke="#000" stroke-width="1.1"/>
<!-- film icon -->
<g>
<rect x="14" y="63" width="2.6" height="15.4" rx="0.8" fill="#595959"/>
<rect x="23.4" y="63" width="2.6" height="15.4" rx="0.8" fill="#595959"/>
<rect x="16.4" y="64.3" width="7.2" height="12.6" fill="#6e4a2e"/>
<rect x="16.9" y="64.9" width="6.2" height="5.2" fill="url(#gBlue)"/>
<rect x="16.9" y="71" width="6.2" height="5.3" fill="url(#gBlue)"/>
<g fill="#ececec"><rect x="14.8" y="65" width="1" height="1"/><rect x="14.8" y="67" width="1" height="1"/><rect x="14.8" y="69" width="1" height="1"/><rect x="14.8" y="71" width="1" height="1"/><rect x="14.8" y="73" width="1" height="1"/><rect x="14.8" y="75" width="1" height="1"/>
<rect x="24.2" y="65" width="1" height="1"/><rect x="24.2" y="67" width="1" height="1"/><rect x="24.2" y="69" width="1" height="1"/><rect x="24.2" y="71" width="1" height="1"/><rect x="24.2" y="73" width="1" height="1"/><rect x="24.2" y="75" width="1" height="1"/></g>
</g>
<!-- folder icon -->
<g>
<path d="M34.5 76.5 V66 Q34.5 65.5 35 65.5 H39.3 L40.3 66.6 H47 Q47.6 66.6 47.6 67.2 V69.3" fill="#fbd873" stroke="#d7962c" stroke-width="1"/>
<path d="M34.6 76.6 L37 70.6 H41.3 L42.5 69.3 H49.4 Q49.9 69.4 49.7 70 L47.6 76.6 Z" fill="url(#gFold)" stroke="#d7962c" stroke-width="1" stroke-linejoin="round"/>
</g>
<!-- minus -->
<rect x="66" y="71" width="11" height="1" fill="#5a5a5a"/>
<!-- trash can -->
<g>
<rect x="88.5" y="63.5" width="10" height="14.5" rx="2.5" fill="url(#gCan)" stroke="#8c8c8c" stroke-width="1"/>
<ellipse cx="93.5" cy="65.8" rx="4.4" ry="1.9" fill="#e9e9e9" stroke="#9a9a9a" stroke-width="0.7"/>
<g fill="#8e8e8e"><rect x="90.5" y="69.6" width="1.3" height="1"/><rect x="92.9" y="69.6" width="1.3" height="1"/><rect x="95.3" y="69.6" width="1.3" height="1"/>
<rect x="90.5" y="72" width="1.3" height="1"/><rect x="92.9" y="72" width="1.3" height="1"/><rect x="95.3" y="72" width="1.3" height="1"/>
<rect x="90.5" y="74.4" width="1.3" height="1"/><rect x="92.9" y="74.4" width="1.3" height="1"/><rect x="95.3" y="74.4" width="1.3" height="1"/></g>
</g>
<!-- save icon -->
<g>
<rect x="108.5" y="63.5" width="15" height="14.5" rx="1.6" fill="#58aeea" stroke="#1f86cf" stroke-width="1.2"/>
<rect x="110.6" y="64.2" width="10.8" height="6.2" rx="0.8" fill="#fafafa"/>
<path d="M112 66.2H115.4M116.4 66.2H119.8M112 68.2H114M115 68.2H117.6M118.6 68.2H119.8" stroke="#777" stroke-width="0.9"/>
<rect x="110.2" y="64.8" width="0.7" height="3.6" fill="#1a4f8a"/><rect x="121.2" y="64.8" width="0.7" height="3.6" fill="#1a4f8a"/>
<rect x="112.6" y="72.4" width="7.2" height="5.8" fill="#f4f4f4"/>
<rect x="114" y="73.6" width="1.4" height="3.4" fill="#333"/>
</g>
<!-- pause / stop -->
<rect x="226" y="63" width="5" height="16" fill="#575757"/>
<rect x="233" y="63" width="5" height="16" fill="#575757"/>
<rect x="246" y="63" width="16" height="16" fill="#575757"/>
<!-- list icon (toolbar) -->
<g id="listico">
<rect x="285.6" y="63.6" width="14.8" height="13.8" rx="1" fill="#fff" stroke="#1a80c0" stroke-width="1.2"/>
<rect x="286.2" y="64.2" width="13.6" height="1.6" fill="#49a4e0"/>
<g fill="#2d6fd0"><rect x="288" y="67.6" width="1" height="1"/><rect x="288" y="69.7" width="1" height="1"/><rect x="288" y="71.7" width="1" height="1"/><rect x="288" y="73.8" width="1" height="1"/></g>
<g fill="#808080"><rect x="289.8" y="67.7" width="8" height="0.9"/><rect x="289.8" y="69.8" width="8" height="0.9"/><rect x="289.8" y="71.8" width="8" height="0.9"/><rect x="289.8" y="73.9" width="8" height="0.9"/></g>
</g>
<use href="#listico" x="-83.2" y="593.3"/>
<!-- panel toggle icon -->
<g>
<rect x="586.6" y="63.6" width="14.8" height="13.8" rx="1" fill="#fff" stroke="#1a80c0" stroke-width="1.2"/>
<rect x="587.2" y="64.2" width="13.6" height="1.4" fill="#49a4e0"/>
<rect x="593.6" y="65" width="1.1" height="12" fill="#1a80c0"/>
<rect x="595.2" y="66.4" width="4.8" height="9.8" fill="#e2e2e2"/>
<g fill="#555"><rect x="595.9" y="67.6" width="0.9" height="0.9"/><rect x="595.9" y="69.6" width="0.9" height="0.9"/><rect x="595.9" y="71.6" width="0.9" height="0.9"/><rect x="595.9" y="73.6" width="0.9" height="0.9"/></g>
<path d="M587.2 71.2 L590.8 67.2 V69.6 H593.4 V72.8 H590.8 V75.2 Z" fill="#7fd11a" stroke="#4c9a0a" stroke-width="0.7" stroke-linejoin="round"/>
</g>
<!-- select arrows -->
<path d="M957 69H965L961 73Z" fill="#000"/>
<path d="M1012.6 69H1020.6L1016.6 73Z" fill="#000"/>
<path d="M1013 662H1021L1017 666Z" fill="#000"/>
<!-- scrollbar chevrons -->
<path d="M601.2 103.6L604.6 100.2L608 103.6" fill="none" stroke="#505050" stroke-width="1.9"/>
<path d="M601.2 633.2L604.6 636.6L608 633.2" fill="none" stroke="#505050" stroke-width="1.9"/>
<!-- header triangles -->
<path d="M1018.3 106.6H1026.1L1022.2 102.6Z" fill="#e4e4e4" stroke="#7a7a7a" stroke-width="0.9" stroke-linejoin="round"/>
<path d="M1018.3 249.1H1026.1L1022.2 245.1Z" fill="#e4e4e4" stroke="#7a7a7a" stroke-width="0.9" stroke-linejoin="round"/>
<path d="M1018.3 343.5H1026.1L1022.2 347.5Z" fill="#e4e4e4" stroke="#7a7a7a" stroke-width="0.9" stroke-linejoin="round"/>
<path d="M1018.3 373.1H1026.1L1022.2 369.1Z" fill="#e4e4e4" stroke="#7a7a7a" stroke-width="0.9" stroke-linejoin="round"/>
<!-- bottom-left icons -->
<g>
<rect x="12" y="656" width="2" height="12" rx="0.6" fill="#595959"/><rect x="21" y="656" width="2" height="5" rx="0.6" fill="#595959"/>
<rect x="13.8" y="657" width="7.4" height="10" fill="#6e4a2e"/><rect x="14.3" y="657.6" width="6.4" height="4" fill="url(#gBlue)"/>
<rect x="16" y="659.5" width="2.2" height="12.5" rx="0.6" fill="#595959"/><rect x="25.6" y="659.5" width="2.2" height="12.5" rx="0.6" fill="#595959"/>
<rect x="18" y="660.5" width="7.8" height="10.5" fill="#6e4a2e"/>
<rect x="18.5" y="661.1" width="6.8" height="4.2" fill="url(#gBlue)"/><rect x="18.5" y="666.1" width="6.8" height="4.3" fill="url(#gBlue)"/>
<g fill="#ececec"><rect x="12.5" y="658" width="0.9" height="0.9"/><rect x="12.5" y="660" width="0.9" height="0.9"/><rect x="12.5" y="662" width="0.9" height="0.9"/><rect x="12.5" y="664" width="0.9" height="0.9"/><rect x="12.5" y="666" width="0.9" height="0.9"/>
<rect x="16.6" y="661" width="0.9" height="0.9"/><rect x="16.6" y="663" width="0.9" height="0.9"/><rect x="16.6" y="665" width="0.9" height="0.9"/><rect x="16.6" y="667" width="0.9" height="0.9"/><rect x="16.6" y="669" width="0.9" height="0.9"/>
<rect x="26.2" y="661" width="0.9" height="0.9"/><rect x="26.2" y="663" width="0.9" height="0.9"/><rect x="26.2" y="665" width="0.9" height="0.9"/><rect x="26.2" y="667" width="0.9" height="0.9"/><rect x="26.2" y="669" width="0.9" height="0.9"/>
<rect x="21.5" y="657.2" width="0.9" height="0.9"/><rect x="21.5" y="659" width="0.9" height="0.9"/></g>
</g>
<g opacity="0.9">
<rect x="34.3" y="657.3" width="6.4" height="5.6" fill="#d4d4d4"/><rect x="43.3" y="657.3" width="6.4" height="5.6" fill="#d4d4d4"/>
<rect x="35" y="659" width="2.2" height="3" fill="#9fd2ff"/><rect x="37.8" y="659" width="2.2" height="3" fill="#9fd2ff"/>
<rect x="44" y="659" width="2.2" height="3" fill="#9fd2ff"/><rect x="46.8" y="659" width="2.2" height="3" fill="#9fd2ff"/>
<rect x="35.8" y="664.4" width="6" height="4.2" rx="1.2" fill="#fafafa" stroke="#cfcfcf" stroke-width="1"/>
<rect x="42.2" y="664.4" width="6" height="4.2" rx="1.2" fill="#fafafa" stroke="#cfcfcf" stroke-width="1"/>
<rect x="39.5" y="666" width="5" height="1.1" fill="#c4c4c4"/>
</g>
<!-- eye -->
<g>
<path d="M224.2 663.8 C227 659.4 236.6 659.2 239.8 663.8 C236.6 668.6 227 668.4 224.2 663.8 Z" fill="#f2f8ff" stroke="#d58a04" stroke-width="1.3"/>
<circle cx="231.8" cy="663.6" r="3.2" fill="#2c7fd0"/>
<circle cx="231.8" cy="663.6" r="1.8" fill="#111"/>
<rect x="231.4" y="662.4" width="1" height="1" fill="#cfe6ff"/>
</g>
<!-- gear -->
<g>
<path id="gear" d="M252.3 656.4h2.4l.4 1.8 1.3.55 1.6-1 1.7 1.7-1 1.6.55 1.3 1.8.4v2.4l-1.8.4-.55 1.3 1 1.6-1.7 1.7-1.6-1-1.3.55-.4 1.8h-2.4l-.4-1.8-1.3-.55-1.6 1-1.7-1.7 1-1.6-.55-1.3-1.8-.4v-2.4l1.8-.4.55-1.3-1-1.6 1.7-1.7 1.6 1 1.3-.55z" fill="#d4d4d4" stroke="#868686" stroke-width="1" stroke-linejoin="round"/>
<circle cx="253.5" cy="663.9" r="2.1" fill="#f4f4f4" stroke="#8e8e8e" stroke-width="1"/>
</g>
</svg>

<div class="t" style="top:6.5px;left:30.2px;font-size:12px;letter-spacing:-0.07px;">XviD4PSP 8.1.95 PRO</div>
<div class="t" style="top:31.5px;left:8.3px;font-size:12px;color:#666;letter-spacing:-0.39px;">XviD4PSP</div>
<div class="t" style="top:31.5px;left:76px;color:#666;letter-spacing:-0.01px;"><span class="c">文件</span></div>
<div class="t" style="top:31.5px;left:114px;color:#666;letter-spacing:-0.01px;"><span class="c">任务</span></div>
<div class="t" style="top:31.5px;left:152px;color:#666;letter-spacing:-0.01px;"><span class="c">日志</span></div>
<div class="t" style="top:31.5px;left:190px;color:#666;letter-spacing:-0.01px;"><span class="c">工具</span></div>
<div class="t" style="top:31.5px;left:228.4px;font-size:12px;color:#666;letter-spacing:-0.81px;">PRO</div>
<div class="t" style="top:31.5px;left:267px;color:#666;letter-spacing:-0.01px;"><span class="c">帮助</span></div>
<div class="t" style="top:61.5px;left:321px;letter-spacing:-0.01px;"><span class="c">信息</span></div>
<div class="t" style="top:61.5px;left:365px;letter-spacing:-0.01px;"><span class="c">元数据</span></div>
<div class="t" style="top:61.5px;left:421px;letter-spacing:-0.01px;"><span class="c">章节</span></div>
<div class="t" style="top:61.5px;left:465.2px;letter-spacing:-0.01px;"><span class="c">剪辑</span></div>
<div class="t" style="top:61.5px;left:509px;"><span class="c">流</span></div>
<div class="t" style="top:61.5px;left:541.4px;color:#fff;letter-spacing:-0.01px;"><span class="c">状态</span></div>
<div class="t" style="top:61.5px;left:882.4px;letter-spacing:-0.26px;"><span class="c">优先级</span>:</div>
<div class="t" style="top:61.5px;left:930.6px;"><span class="c">中</span></div>
<div class="t" style="top:61.5px;left:978.4px;letter-spacing:-0.54px;">100%</div>
<div class="t" style="top:95.5px;left:86.5px;color:#fff;letter-spacing:-0.11px;">Cinematic Pro...isbon City.mov</div>
<div class="t" style="top:116.5px;left:86.5px;color:#fff;letter-spacing:-0.03px;">15.71mb &gt; 2.27mb ? 22.20mb</div>
<div class="t" style="top:151.5px;left:86.5px;color:#fff;letter-spacing:-0.50px;">ENCODING:</div>
<div class="t" style="top:151.5px;left:227.9px;color:#fff;letter-spacing:-0.66px;">10.25%</div>
<div class="t" style="top:97px;left:623.1px;letter-spacing:-0.25px;"><span class="c">引擎使用率</span>:</div>
<div class="t" style="top:122.5px;left:623.1px;letter-spacing:-0.31px;"><span class="c">解码</span>:</div>
<div class="t" style="top:122.5px;right:107px;letter-spacing:-0.43px;">128</div>
<div class="t" style="top:122.5px;right:7.5px;letter-spacing:-0.57px;">33.3%</div>
<div class="t" style="top:144.5px;left:623.1px;letter-spacing:-0.13px;"><span class="c">滤镜处理</span>:</div>
<div class="t" style="top:144.5px;right:107px;letter-spacing:-0.43px;">16</div>
<div class="t" style="top:144.5px;right:7.5px;letter-spacing:-0.57px;">14.3%</div>
<div class="t" style="top:166.5px;left:623.1px;letter-spacing:-0.31px;"><span class="c">编码</span>:</div>
<div class="t" style="top:166.5px;right:107px;letter-spacing:-0.43px;">16</div>
<div class="t" style="top:166.5px;right:7.5px;letter-spacing:-0.57px;">20.0%</div>
<div class="t" style="top:188.5px;left:623.1px;letter-spacing:-0.31px;"><span class="c">同步</span>:</div>
<div class="t" style="top:188.5px;right:107px;letter-spacing:-0.43px;">318</div>
<div class="t" style="top:188.5px;right:7.5px;letter-spacing:-0.62px;">397.5%</div>
<div class="t" style="top:210.5px;left:623.1px;letter-spacing:-0.31px;"><span class="c">写入</span>:</div>
<div class="t" style="top:210.5px;right:107px;">0</div>
<div class="t" style="top:210.5px;right:7.5px;letter-spacing:-0.60px;">0%</div>
<div class="t" style="top:238.5px;left:623.1px;letter-spacing:-0.25px;"><span class="c">系统使用率</span>:</div>
<div class="t" style="top:265px;left:623.1px;letter-spacing:-0.31px;"><span class="c">内存</span>:</div>
<div class="t" style="top:265px;right:7.5px;letter-spacing:-0.30px;">521.66mb</div>
<div class="t" style="top:287px;left:623.1px;letter-spacing:-0.16px;"><span class="c">处理器</span>:</div>
<div class="t" style="top:287px;right:7.5px;letter-spacing:-0.52px;">47.0%</div>
<div class="t" style="top:309px;left:623.1px;letter-spacing:-0.13px;"><span class="c">空闲空间</span>:</div>
<div class="t" style="top:309px;right:7.5px;letter-spacing:-0.22px;">15.80gb</div>
<div class="t" style="top:336.5px;left:623.1px;letter-spacing:-0.13px;"><span class="c">品质衡量</span>:</div>
<div class="t" style="top:362.5px;left:623.1px;letter-spacing:-0.16px;"><span class="c">当前帧</span>:</div>
<div class="t" style="top:648px;left:274px;letter-spacing:-0.36px;"><span class="c">速度</span>: 89.3</div>
<div class="t" style="top:648px;left:357.2px;letter-spacing:-0.33px;"><span class="c">位置</span>: 00:00:07.774</div>
<div class="t" style="top:648px;left:467.2px;letter-spacing:-0.34px;"><span class="c">进度</span>: 10.25%</div>
<div class="t" style="top:648px;left:554px;letter-spacing:-0.23px;"><span class="c">还剩</span>: 22s</div>
<div class="t" style="top:654.5px;left:902px;letter-spacing:-0.26px;"><span class="c">完成时</span>:</div>
<div class="t" style="top:654.5px;left:950.5px;"><span class="c">什么都不做</span></div>
</body>
</html>
